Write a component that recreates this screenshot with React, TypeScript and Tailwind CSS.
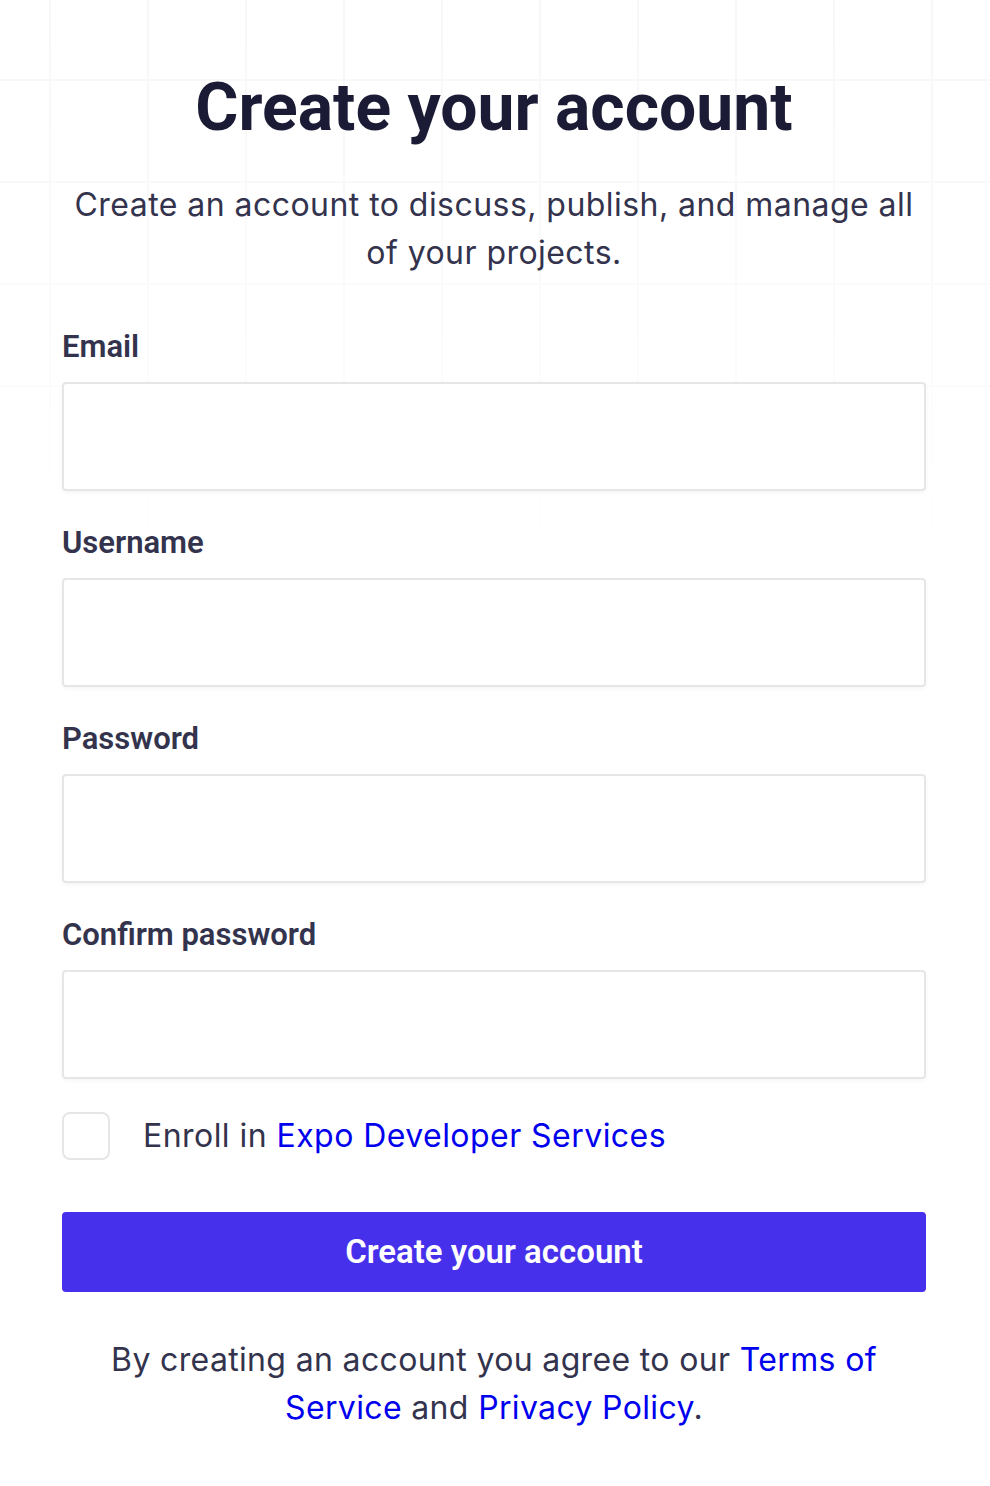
import React from "react";

const body = { fontFamily: "Inter, 'Noto Sans', sans-serif" };
const heading = { fontFamily: "Roboto, 'Noto Sans', sans-serif" };

function Field({ label, type }: { label: string; type: string }) {
  return (
    <div className="flex flex-col">
      <label className="text-[31px] leading-[36px] font-semibold text-[#33334d]" style={heading}>
        {label}
      </label>
      <input
        type={type}
        className="mt-[17px] h-[109px] w-full rounded-[4px] border-2 border-[#e6e6e8] bg-white px-4 text-[32px] shadow-[0_2px_4px_rgba(0,0,0,0.04)] outline-none"
      />
    </div>
  );
}

export default function App() {
  return (
    <div className="relative min-h-[1486px] w-full bg-white" style={body}>
      <div className="pointer-events-none absolute inset-x-0 top-0 h-[560px] bg-[linear-gradient(to_right,#f6f6f8_2px,transparent_2px),linear-gradient(to_bottom,#f6f6f8_2px,transparent_2px)] bg-[size:98px_102px] bg-[position:49px_-23px] [mask-image:linear-gradient(to_bottom,rgba(0,0,0,0.9),rgba(0,0,0,0.5)_50%,transparent)]" />
      <div className="relative ml-[62px] flex w-[864px] flex-col pt-[68px]">
        <h1 className="text-center text-[66px] leading-[80px] font-bold text-[#1b1b35]" style={heading}>
          Create your account
        </h1>
        <p className="mt-[33px] text-center text-[32px] leading-[48px] tracking-[0.45px] text-[#33334d]">
          Create an account to discuss, publish, and manage all of your projects.
        </p>
        <div className="mt-[52px] flex flex-col gap-[34px]">
          <Field label="Email" type="email" />
          <Field label="Username" type="text" />
          <Field label="Password" type="password" />
          <Field label="Confirm password" type="password" />
        </div>
        <div className="mt-[33px] flex items-center gap-[33px]">
          <div className="h-[48px] w-[48px] shrink-0 rounded-[8px] border-2 border-[#e6e6e8] bg-white" />
          <span className="text-[32px] leading-[48px] tracking-[0.45px] text-[#33334d]">
            Enroll in <a className="text-[#0000ee]">Expo Developer Services</a>
          </span>
        </div>
        <button
          className="mt-[52px] h-[80px] w-full rounded-[4px] bg-[#4630eb] text-[33px] font-semibold text-white"
          style={heading}
        >
          Create your account
        </button>
        <p className="mt-[44px] px-[36px] text-center text-[32px] leading-[48px] tracking-[0.35px] text-[#33334d]">
          By creating an account you agree to our <a className="text-[#0000ee]">Terms of Service</a> and{" "}
          <a className="text-[#0000ee]">Privacy Policy</a>.
        </p>
      </div>
    </div>
  );
}
